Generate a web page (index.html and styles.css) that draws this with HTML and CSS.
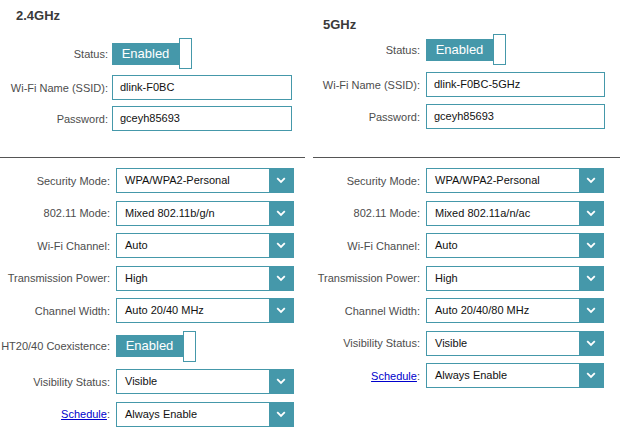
FILE: index.html
```html
<!DOCTYPE html>
<html>
<head>
<meta charset="utf-8">
<link rel="stylesheet" href="styles.css">
</head>
<body>
<div class="page">
  <section class="band band-left">
    <h2 class="band-title">2.4GHz</h2>
    <div class="rows rows-top">
      <div class="row">
        <span class="lbl">Status:</span>
        <div class="toggle"><span class="toggle-on">Enabled</span><span class="toggle-knob"></span></div>
      </div>
      <div class="row">
        <span class="lbl">Wi-Fi Name (SSID):</span>
        <div class="field">dlink-F0BC</div>
      </div>
      <div class="row">
        <span class="lbl">Password:</span>
        <div class="field">gceyh85693</div>
      </div>
    </div>
    <div class="rule"></div>
    <div class="rows rows-bottom">
      <div class="row">
        <span class="lbl">Security Mode:</span>
        <div class="select"><span class="select-text">WPA/WPA2-Personal</span><span class="select-btn"><svg width="10" height="7" viewBox="0 0 10 7"><polyline points="1.2,1.2 5,5 8.8,1.2" fill="none" stroke="#fff" stroke-width="1.8"/></svg></span></div>
      </div>
      <div class="row">
        <span class="lbl">802.11 Mode:</span>
        <div class="select"><span class="select-text">Mixed 802.11b/g/n</span><span class="select-btn"><svg width="10" height="7" viewBox="0 0 10 7"><polyline points="1.2,1.2 5,5 8.8,1.2" fill="none" stroke="#fff" stroke-width="1.8"/></svg></span></div>
      </div>
      <div class="row">
        <span class="lbl">Wi-Fi Channel:</span>
        <div class="select"><span class="select-text">Auto</span><span class="select-btn"><svg width="10" height="7" viewBox="0 0 10 7"><polyline points="1.2,1.2 5,5 8.8,1.2" fill="none" stroke="#fff" stroke-width="1.8"/></svg></span></div>
      </div>
      <div class="row">
        <span class="lbl">Transmission Power:</span>
        <div class="select"><span class="select-text">High</span><span class="select-btn"><svg width="10" height="7" viewBox="0 0 10 7"><polyline points="1.2,1.2 5,5 8.8,1.2" fill="none" stroke="#fff" stroke-width="1.8"/></svg></span></div>
      </div>
      <div class="row">
        <span class="lbl">Channel Width:</span>
        <div class="select"><span class="select-text">Auto 20/40 MHz</span><span class="select-btn"><svg width="10" height="7" viewBox="0 0 10 7"><polyline points="1.2,1.2 5,5 8.8,1.2" fill="none" stroke="#fff" stroke-width="1.8"/></svg></span></div>
      </div>
      <div class="row">
        <span class="lbl">HT20/40 Coexistence:</span>
        <div class="toggle"><span class="toggle-on">Enabled</span><span class="toggle-knob"></span></div>
      </div>
      <div class="row">
        <span class="lbl">Visibility Status:</span>
        <div class="select"><span class="select-text">Visible</span><span class="select-btn"><svg width="10" height="7" viewBox="0 0 10 7"><polyline points="1.2,1.2 5,5 8.8,1.2" fill="none" stroke="#fff" stroke-width="1.8"/></svg></span></div>
      </div>
      <div class="row">
        <span class="lbl"><a class="link" href="#">Schedule</a>:</span>
        <div class="select"><span class="select-text">Always Enable</span><span class="select-btn"><svg width="10" height="7" viewBox="0 0 10 7"><polyline points="1.2,1.2 5,5 8.8,1.2" fill="none" stroke="#fff" stroke-width="1.8"/></svg></span></div>
      </div>
    </div>
  </section>

  <section class="band band-right">
    <h2 class="band-title">5GHz</h2>
    <div class="rows rows-top">
      <div class="row">
        <span class="lbl">Status:</span>
        <div class="toggle"><span class="toggle-on">Enabled</span><span class="toggle-knob"></span></div>
      </div>
      <div class="row">
        <span class="lbl">Wi-Fi Name (SSID):</span>
        <div class="field">dlink-F0BC-5GHz</div>
      </div>
      <div class="row">
        <span class="lbl">Password:</span>
        <div class="field">gceyh85693</div>
      </div>
    </div>
    <div class="rule"></div>
    <div class="rows rows-bottom">
      <div class="row">
        <span class="lbl">Security Mode:</span>
        <div class="select"><span class="select-text">WPA/WPA2-Personal</span><span class="select-btn"><svg width="10" height="7" viewBox="0 0 10 7"><polyline points="1.2,1.2 5,5 8.8,1.2" fill="none" stroke="#fff" stroke-width="1.8"/></svg></span></div>
      </div>
      <div class="row">
        <span class="lbl">802.11 Mode:</span>
        <div class="select"><span class="select-text">Mixed 802.11a/n/ac</span><span class="select-btn"><svg width="10" height="7" viewBox="0 0 10 7"><polyline points="1.2,1.2 5,5 8.8,1.2" fill="none" stroke="#fff" stroke-width="1.8"/></svg></span></div>
      </div>
      <div class="row">
        <span class="lbl">Wi-Fi Channel:</span>
        <div class="select"><span class="select-text">Auto</span><span class="select-btn"><svg width="10" height="7" viewBox="0 0 10 7"><polyline points="1.2,1.2 5,5 8.8,1.2" fill="none" stroke="#fff" stroke-width="1.8"/></svg></span></div>
      </div>
      <div class="row">
        <span class="lbl">Transmission Power:</span>
        <div class="select"><span class="select-text">High</span><span class="select-btn"><svg width="10" height="7" viewBox="0 0 10 7"><polyline points="1.2,1.2 5,5 8.8,1.2" fill="none" stroke="#fff" stroke-width="1.8"/></svg></span></div>
      </div>
      <div class="row">
        <span class="lbl">Channel Width:</span>
        <div class="select"><span class="select-text">Auto 20/40/80 MHz</span><span class="select-btn"><svg width="10" height="7" viewBox="0 0 10 7"><polyline points="1.2,1.2 5,5 8.8,1.2" fill="none" stroke="#fff" stroke-width="1.8"/></svg></span></div>
      </div>
      <div class="row">
        <span class="lbl">Visibility Status:</span>
        <div class="select"><span class="select-text">Visible</span><span class="select-btn"><svg width="10" height="7" viewBox="0 0 10 7"><polyline points="1.2,1.2 5,5 8.8,1.2" fill="none" stroke="#fff" stroke-width="1.8"/></svg></span></div>
      </div>
      <div class="row">
        <span class="lbl"><a class="link" href="#">Schedule</a>:</span>
        <div class="select"><span class="select-text">Always Enable</span><span class="select-btn"><svg width="10" height="7" viewBox="0 0 10 7"><polyline points="1.2,1.2 5,5 8.8,1.2" fill="none" stroke="#fff" stroke-width="1.8"/></svg></span></div>
      </div>
    </div>
  </section>
</div>
</body>
</html>
```

FILE: styles.css
```css
html, body {
  margin: 0;
  padding: 0;
  background: #ffffff;
}

body {
  font-family: "Liberation Sans", Arial, sans-serif;
  font-size: 11px;
  color: #4d4d4d;
}

.page {
  display: grid;
  grid-template-columns: 305px 307px;
  column-gap: 8px;
  width: 620px;
}

.band {
  display: flex;
  flex-direction: column;
}

.band-title {
  margin: 0;
  font-size: 13px;
  font-weight: bold;
  line-height: 16px;
  height: 16px;
  color: #3a3a3a;
}

.band-left .band-title {
  margin-top: 8px;
  padding-left: 16px;
}

.band-right .band-title {
  margin-top: 17px;
  padding-left: 10px;
}

.rows {
  display: flex;
  flex-direction: column;
}

.band-left .rows-top {
  margin-top: 14px;
  gap: 6px;
  --lw: 108px;
  --gap: 4px;
}

.band-right .rows-top {
  margin-top: 1px;
  gap: 7px;
  --lw: 107px;
  --gap: 6px;
}

.band-left .rows-bottom {
  --lw: 110px;
  --gap: 6px;
}

.band-right .rows-bottom {
  --lw: 107px;
  --gap: 6px;
}

.rows-bottom {
  margin-top: 10px;
  gap: 7.5px;
}

.rule {
  height: 1px;
  background: #555555;
}

.band-left .rule {
  margin-top: 26px;
}

.band-right .rule {
  margin-top: 28px;
}

.row {
  display: flex;
  align-items: center;
  gap: var(--gap);
}

.lbl {
  flex: none;
  width: var(--lw);
  text-align: right;
  white-space: nowrap;
  line-height: 14px;
}

.link {
  color: #0000cc;
  text-decoration: underline;
}

.field {
  box-sizing: border-box;
  width: 180px;
  height: 25px;
  border: 1px solid #4598aa;
  padding-left: 7px;
  line-height: 23px;
  color: #111111;
  background: #ffffff;
}

.band-right .field {
  width: 179px;
}

.select {
  box-sizing: border-box;
  display: flex;
  width: 178px;
  height: 25px;
  border: 1px solid #4598aa;
  background: #ffffff;
}

.select-text {
  flex: 1;
  padding-left: 8px;
  line-height: 23px;
  color: #111111;
  white-space: nowrap;
}

.select-btn {
  flex: none;
  width: 24px;
  background: #4598aa;
  display: flex;
  align-items: center;
  justify-content: center;
}

.toggle {
  display: flex;
  align-items: center;
  height: 31px;
}

.toggle-on {
  width: 67px;
  height: 22px;
  background: #4598aa;
  color: #ffffff;
  font-size: 13px;
  line-height: 22px;
  text-align: center;
}

.toggle-knob {
  box-sizing: border-box;
  width: 13px;
  height: 31px;
  border: 1px solid #4598aa;
  background: #ffffff;
}
```
